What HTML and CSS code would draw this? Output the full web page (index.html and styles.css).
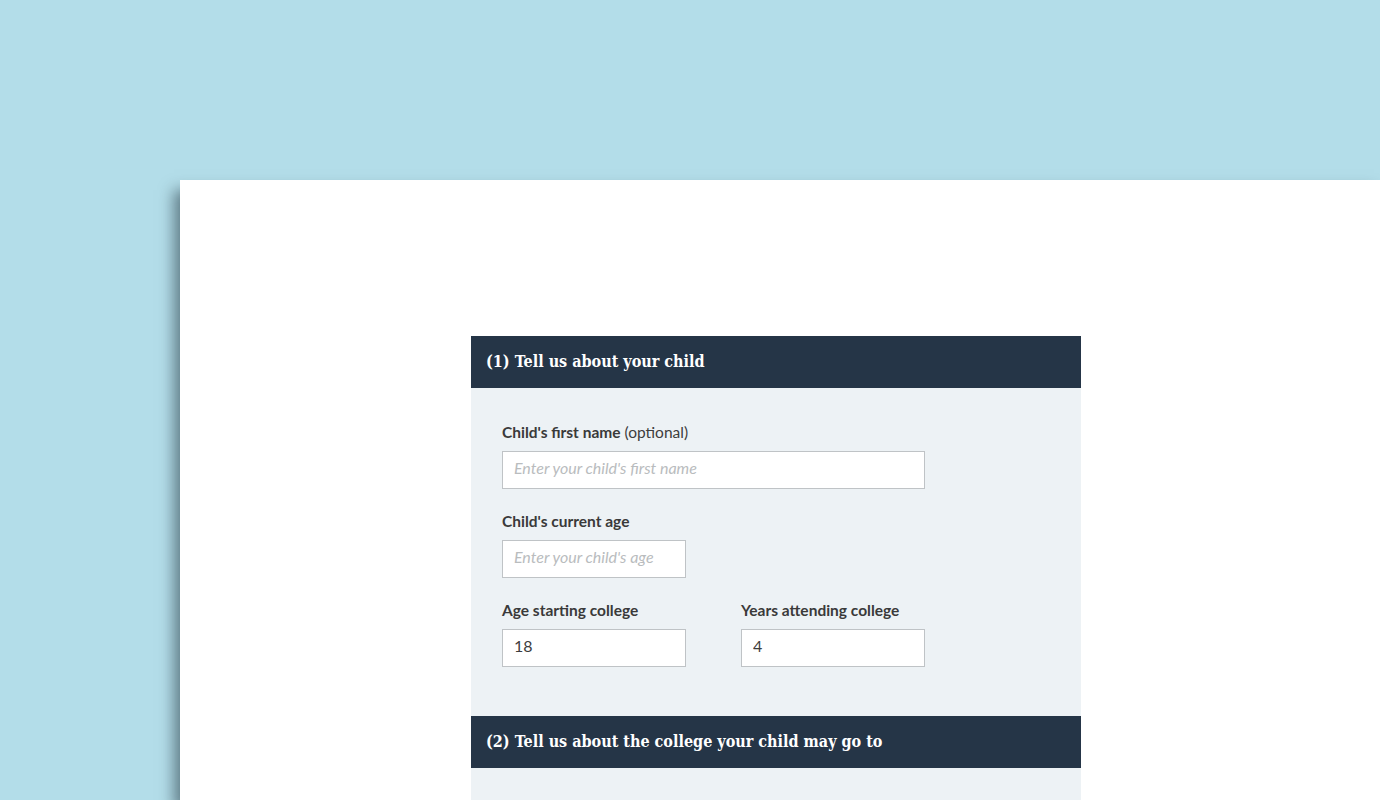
FILE: index.html
```html
<!DOCTYPE html>
<html lang="en">
  <head>
    <meta charset="UTF-8" />
    <title>College costs</title>
    <link rel="stylesheet" href="styles.css">
  </head>
  <body>
    <div class="sheet">
      <div class="calculator">
        <h2 class="step-title">(1) Tell us about your child</h2>
        <div class="step-body">
          <div class="field">
            <label for="childName"><b>Child's first name</b> (optional)</label>
            <input type="text" id="childName" class="wide" placeholder="Enter your child's first name" />
          </div>
          <div class="field">
            <label for="childAge"><b>Child's current age</b></label>
            <input type="text" id="childAge" placeholder="Enter your child's age" />
          </div>
          <div class="field-row">
            <div class="field">
              <label for="startAge"><b>Age starting college</b></label>
              <input type="text" id="startAge" value="18" />
            </div>
            <div class="field">
              <label for="years"><b>Years attending college</b></label>
              <input type="text" id="years" value="4" />
            </div>
          </div>
        </div>
        <h2 class="step-title">(2) Tell us about the college your child may go to</h2>
        <div class="step-body"></div>
      </div>
    </div>
  </body>
</html>
```

FILE: styles.css
```css
html,
body {
  height: 100%;
}

body {
  box-sizing: border-box;
  margin: 0;
  padding: 180px 0 0 180px;
  background-color: #b3dde9;
  font-family: "Source Sans Pro", Lato, "Open Sans", sans-serif;
  overflow: hidden;
}

.sheet {
  box-sizing: border-box;
  height: 100%;
  overflow: hidden;
  background-color: #fff;
  padding: 156px 0 0 291px;
  box-shadow: -6px 10px 14px rgba(40, 60, 70, 0.6);
}

.calculator {
  width: 610px;
}

.step-title {
  margin: 0;
  height: 52px;
  line-height: 52px;
  padding: 0 15px;
  background-color: #253547;
  color: #fff;
  font-family: "DejaVu Serif Condensed", "DejaVu Serif", Georgia, serif;
  font-stretch: condensed;
  font-size: 16px;
  font-weight: bold;
}

.step-body {
  background-color: #edf2f5;
  padding: 34px 31px 49px;
}

.field {
  margin-bottom: 22px;
}

.field label {
  display: block;
  font-size: 15.5px;
  line-height: 20px;
  color: #3d3d3d;
  margin-bottom: 9px;
}

.field label b {
  color: #3a3a3a;
}

.field input {
  box-sizing: border-box;
  width: 184px;
  height: 38px;
  padding: 0 11px 6px;
  border: 1px solid #bfc3c6;
  background: #fff;
  font-family: inherit;
  font-size: 16px;
  color: #3d3d3d;
  outline: none;
}

.field input.wide {
  width: 423px;
}

.field input::placeholder {
  color: #b9bcbe;
  font-style: italic;
}

.field-row {
  display: flex;
  gap: 55px;
}

.field-row .field {
  margin-bottom: 0;
}
```
